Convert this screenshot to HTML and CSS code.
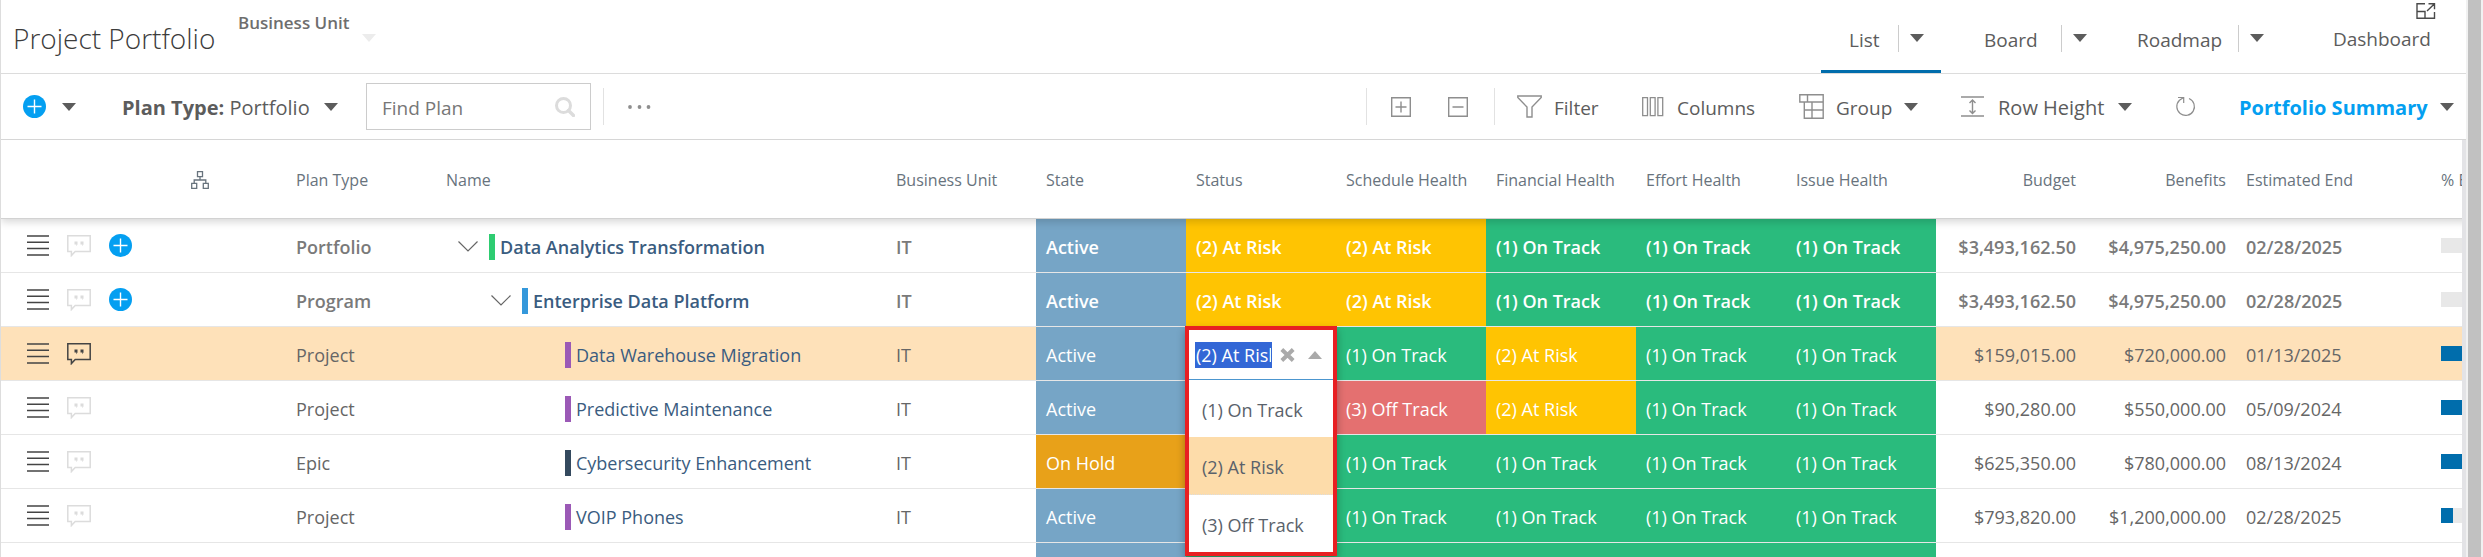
FILE: index.html
```html
<!DOCTYPE html>
<html lang="en">
<head>
<meta charset="utf-8">
<title>Project Portfolio</title>
<link rel="stylesheet" href="styles.css">
</head>
<body>
<svg class="sprite" aria-hidden="true">
  <symbol id="i-menu" viewBox="0 0 22 21"><path d="M0 1h22M0 7.3h22M0 13.6h22M0 19.9h22" fill="none" stroke="currentColor" stroke-width="1.5"/></symbol>
  <symbol id="i-note" viewBox="0 0 24 22"><path d="M.8.8h22.4v15.8H8.2L4.4 20.6v-4H.8z" fill="none" stroke="currentColor" stroke-width="1.5"/><path d="M7.5 6.5h3v3l-1.4 1.8.3-1.8H7.5zM13.5 6.5h3v3l-1.4 1.8.3-1.8h-1.9z" fill="currentColor"/></symbol>
  <symbol id="i-plus" viewBox="0 0 23 23"><circle cx="11.5" cy="11.5" r="11.5" fill="#049ff1"/><path d="M11.5 4.5v14M4.5 11.5h14" stroke="#fff" stroke-width="1.4"/></symbol>
  <symbol id="i-caret" viewBox="0 0 14 8"><path d="M0 0h14L7 8z" fill="currentColor"/></symbol>
  <symbol id="i-chev" viewBox="0 0 20 11"><path d="M.5.5 10 10 19.5.5" fill="none" stroke="currentColor" stroke-width="1.2"/></symbol>
</svg>

<div class="app">
  <main class="page">
    <header class="topbar">
      <h1 class="title">Project Portfolio</h1>
      <div class="unit">
        <span class="unit-label">Business Unit</span>
        <button class="icon-btn unit-caret" aria-label="Choose business unit"><svg class="caret"><use href="#i-caret"/></svg></button>
      </div>
      <nav class="tabs">
        <div class="tab tab-list active"><a class="tab-link" href="#list">List</a><button class="tab-more" aria-label="List options"><svg class="caret"><use href="#i-caret"/></svg></button></div>
        <div class="tab tab-board"><a class="tab-link" href="#board">Board</a><button class="tab-more" aria-label="Board options"><svg class="caret"><use href="#i-caret"/></svg></button></div>
        <div class="tab tab-road"><a class="tab-link" href="#roadmap">Roadmap</a><button class="tab-more" aria-label="Roadmap options"><svg class="caret"><use href="#i-caret"/></svg></button></div>
        <div class="tab tab-dash">
          <button class="icon-btn popout" aria-label="Open in new window"><svg width="20" height="16" viewBox="0 0 20 16" fill="none" stroke="currentColor" stroke-width="1.4"><path d="M9 .8H1v14.4h17.500V9M1 8.500h8v6.700M12.500.8h6v5.500M18.500.8 11 8"/></svg></button>
          <a class="tab-link" href="#dashboard">Dashboard</a>
        </div>
      </nav>
    </header>

    <div class="toolbar">
      <button class="icon-btn add" aria-label="Add"><svg class="plus"><use href="#i-plus"/></svg><svg class="caret"><use href="#i-caret"/></svg></button>
      <button class="tool plan-type"><span><b>Plan Type:</b> Portfolio</span><svg class="caret"><use href="#i-caret"/></svg></button>
      <label class="search">
        <input class="search-input" type="text" placeholder="Find Plan" aria-label="Find Plan">
        <svg class="search-icon" viewBox="0 0 20 20" fill="none" stroke="currentColor"><circle cx="8.500" cy="8.500" r="7" stroke-width="3"/><path d="m13.500 13.500 5 5" stroke-width="3.400" stroke-linecap="round"/></svg>
      </label>
      <span class="sep sep-search"></span>
      <button class="icon-btn more" aria-label="More"><svg width="23" height="4" viewBox="0 0 23 4" fill="currentColor"><circle cx="2" cy="2" r="1.900"/><circle cx="11.500" cy="2" r="1.900"/><circle cx="20.500" cy="2" r="1.900"/></svg></button>
      <div class="tools">
        <span class="sep"></span>
        <button class="icon-btn expand" aria-label="Expand all"><svg width="20" height="20" viewBox="0 0 20 20" fill="none" stroke="currentColor" stroke-width="1.400"><path d="M.7.7h18.600v18.600H.7zM10 4.500v11M4.500 10h11"/></svg></button>
        <button class="icon-btn collapse" aria-label="Collapse all"><svg width="20" height="20" viewBox="0 0 20 20" fill="none" stroke="currentColor" stroke-width="1.400"><path d="M.7.7h18.600v18.600H.7zM4.500 10h11"/></svg></button>
        <span class="sep"></span>
        <button class="tool t-filter"><svg width="25" height="23" viewBox="0 0 25 23" fill="none" stroke="currentColor" stroke-width="1.400"><path d="M.8 1h23.400v1.500L15 12v10h-5V12L.8 2.500z"/></svg><span>Filter</span></button>
        <button class="tool t-columns"><svg width="22" height="20" viewBox="0 0 22 20" fill="none" stroke="currentColor" stroke-width="1.300"><path d="M.7.7h4.800v18H.7zM8.300.7h4.800v18H8.300zM15.900.7h4.800v18h-4.800z"/></svg><span>Columns</span></button>
        <button class="tool t-group"><svg width="25" height="25" viewBox="0 0 25 25" fill="none" stroke="currentColor" stroke-width="1.400"><path d="M.8.800h23.400v23.400H5.300V8H.8zM5.300 8h18.900M5.300 16h18.900M8.500.8V8M13 8v16.200"/></svg><span>Group</span><svg class="caret"><use href="#i-caret"/></svg></button>
        <button class="tool t-height"><svg width="23" height="22" viewBox="0 0 23 22" fill="none" stroke="currentColor" stroke-width="1.400"><path d="M0 1h23M0 20h23M11.500 4.500v12.500M8.500 7l3-3 3 3M8.500 14.500l3 3 3-3"/></svg><span>Row Height</span><svg class="caret"><use href="#i-caret"/></svg></button>
        <button class="icon-btn refresh" aria-label="Refresh"><svg width="20" height="21" viewBox="0 0 20 21" fill="none" stroke="currentColor" stroke-width="1.200"><path d="M13 2.500a8.800 8.800 0 1 1-9.500 1.800L7.500 1.500M2 1.500h5.700V7"/></svg></button>
        <button class="tool t-view"><span>Portfolio Summary</span><svg class="caret"><use href="#i-caret"/></svg></button>
      </div>
    </div>

    <div class="grid-wrap">
      <table class="grid">
        <colgroup><col class="c-act"><col class="c-tree"><col class="c-150"><col class="c-name"><col class="c-150"><col class="c-150"><col class="c-150"><col class="c-150"><col class="c-150"><col class="c-150"><col class="c-150"><col class="c-150"><col class="c-150"><col class="c-end"><col class="c-150"></colgroup>
        <thead>
          <tr>
            <th></th>
            <th><svg class="tree" width="18" height="18" viewBox="0 0 18 18" fill="none" stroke="currentColor" stroke-width="1.300"><path d="M6.500.700h5v5h-5zM.7 12.300h5v5h-5zM12.300 12.300h5v5h-5zM9 5.700V9M3.200 12.300V9h11.600v3.300"/></svg></th>
            <th>Plan Type</th><th>Name</th><th>Business Unit</th><th>State</th><th>Status</th><th>Schedule Health</th><th>Financial Health</th><th>Effort Health</th><th>Issue Health</th><th class="num">Budget</th><th class="num">Benefits</th><th>Estimated End</th><th>% Elapsed</th>
          </tr>
        </thead>
        <tbody>
          <tr class="parent">
            <td><div class="acts"><button class="icon-btn" aria-label="Row menu"><svg class="menu"><use href="#i-menu"/></svg></button><button class="icon-btn note" aria-label="Comments"><svg class="bubble"><use href="#i-note"/></svg></button><button class="icon-btn" aria-label="Add child"><svg class="plus"><use href="#i-plus"/></svg></button></div></td>
            <td></td><td>Portfolio</td>
            <td><div class="name lv1"><svg class="chev"><use href="#i-chev"/></svg><i class="bar green"></i><a href="#p1">Data Analytics Transformation</a></div></td>
            <td>IT</td><td class="st-active">Active</td><td class="risk">(2) At Risk</td><td class="risk">(2) At Risk</td><td class="ok">(1) On Track</td><td class="ok">(1) On Track</td><td class="ok">(1) On Track</td><td class="num">$3,493,162.50</td><td class="num">$4,975,250.00</td><td>02/28/2025</td><td><div class="meter"></div></td>
          </tr>
          <tr class="parent">
            <td><div class="acts"><button class="icon-btn" aria-label="Row menu"><svg class="menu"><use href="#i-menu"/></svg></button><button class="icon-btn note" aria-label="Comments"><svg class="bubble"><use href="#i-note"/></svg></button><button class="icon-btn" aria-label="Add child"><svg class="plus"><use href="#i-plus"/></svg></button></div></td>
            <td></td><td>Program</td>
            <td><div class="name lv2"><svg class="chev"><use href="#i-chev"/></svg><i class="bar blue"></i><a href="#p2">Enterprise Data Platform</a></div></td>
            <td>IT</td><td class="st-active">Active</td><td class="risk">(2) At Risk</td><td class="risk">(2) At Risk</td><td class="ok">(1) On Track</td><td class="ok">(1) On Track</td><td class="ok">(1) On Track</td><td class="num">$3,493,162.50</td><td class="num">$4,975,250.00</td><td>02/28/2025</td><td><div class="meter"></div></td>
          </tr>
          <tr class="selected">
            <td><div class="acts"><button class="icon-btn" aria-label="Row menu"><svg class="menu"><use href="#i-menu"/></svg></button><button class="icon-btn note has" aria-label="Comments"><svg class="bubble"><use href="#i-note"/></svg></button></div></td>
            <td></td><td>Project</td>
            <td><div class="name lv3"><i class="bar purple"></i><a href="#p3">Data Warehouse Migration</a></div></td>
            <td>IT</td><td class="st-active">Active</td>
            <td class="ok editing">
              <div class="combo">
                <div class="combo-field">
                  <input class="combo-input" type="text" value="(2) At Risk" aria-label="Status">
                  <button class="icon-btn combo-btn" aria-label="Clear"><svg width="15" height="14" viewBox="0 0 15 14" stroke="currentColor" stroke-width="4"><path d="m1.800 1.500 11.400 11M13.200 1.500l-11.400 11"/></svg></button>
                  <button class="icon-btn combo-btn" aria-label="Close list"><svg class="caret up"><use href="#i-caret"/></svg></button>
                </div>
                <ul class="combo-list" role="listbox">
                  <li role="option">(1) On Track</li>
                  <li class="picked" role="option" aria-selected="true">(2) At Risk</li>
                  <li role="option">(3) Off Track</li>
                </ul>
              </div>
            </td>
            <td class="ok">(1) On Track</td><td class="risk">(2) At Risk</td><td class="ok">(1) On Track</td><td class="ok">(1) On Track</td><td class="num">$159,015.00</td><td class="num">$720,000.00</td><td>01/13/2025</td><td><div class="meter"><div class="fill" style="width:100%"></div></div></td>
          </tr>
          <tr>
            <td><div class="acts"><button class="icon-btn" aria-label="Row menu"><svg class="menu"><use href="#i-menu"/></svg></button><button class="icon-btn note" aria-label="Comments"><svg class="bubble"><use href="#i-note"/></svg></button></div></td>
            <td></td><td>Project</td>
            <td><div class="name lv3"><i class="bar purple"></i><a href="#p4">Predictive Maintenance</a></div></td>
            <td>IT</td><td class="st-active">Active</td><td class="ok"></td><td class="off">(3) Off Track</td><td class="risk">(2) At Risk</td><td class="ok">(1) On Track</td><td class="ok">(1) On Track</td><td class="num">$90,280.00</td><td class="num">$550,000.00</td><td>05/09/2024</td><td><div class="meter"><div class="fill" style="width:100%"></div></div></td>
          </tr>
          <tr>
            <td><div class="acts"><button class="icon-btn" aria-label="Row menu"><svg class="menu"><use href="#i-menu"/></svg></button><button class="icon-btn note" aria-label="Comments"><svg class="bubble"><use href="#i-note"/></svg></button></div></td>
            <td></td><td>Epic</td>
            <td><div class="name lv3"><i class="bar navy"></i><a href="#p5">Cybersecurity Enhancement</a></div></td>
            <td>IT</td><td class="st-hold">On Hold</td><td class="ok"></td><td class="ok">(1) On Track</td><td class="ok">(1) On Track</td><td class="ok">(1) On Track</td><td class="ok">(1) On Track</td><td class="num">$625,350.00</td><td class="num">$780,000.00</td><td>08/13/2024</td><td><div class="meter"><div class="fill" style="width:100%"></div></div></td>
          </tr>
          <tr>
            <td><div class="acts"><button class="icon-btn" aria-label="Row menu"><svg class="menu"><use href="#i-menu"/></svg></button><button class="icon-btn note" aria-label="Comments"><svg class="bubble"><use href="#i-note"/></svg></button></div></td>
            <td></td><td>Project</td>
            <td><div class="name lv3"><i class="bar purple"></i><a href="#p6">VOIP Phones</a></div></td>
            <td>IT</td><td class="st-active">Active</td><td class="ok"></td><td class="ok">(1) On Track</td><td class="ok">(1) On Track</td><td class="ok">(1) On Track</td><td class="ok">(1) On Track</td><td class="num">$793,820.00</td><td class="num">$1,200,000.00</td><td>02/28/2025</td><td><div class="meter"><div class="fill" style="width:9%"></div></div></td>
          </tr>
          <tr>
            <td></td><td></td><td></td><td></td><td></td><td class="st-active"></td><td class="ok"></td><td class="ok"></td><td class="ok"></td><td class="ok"></td><td class="ok"></td><td></td><td></td><td></td><td></td>
          </tr>
        </tbody>
      </table>
    </div>
  </main>
  <div class="scrollbar" aria-hidden="true"></div>
</div>
</body>
</html>
```
FILE: styles.css
```css
* { box-sizing: border-box; }

body {
  margin: 0;
  overflow: hidden;
  background: #fff;
  color: #666;
  font: 18px/24px "Open Sans", "Noto Sans", sans-serif;
}

button, input { font: inherit; color: inherit; }
button { padding: 0; border: 0; background: none; cursor: pointer; }
a { color: inherit; text-decoration: none; }
svg { display: block; flex: none; }
.sprite { position: absolute; width: 0; height: 0; }

.caret { width: 14px; height: 8px; color: #5c5c5c; }
.plus { width: 23px; height: 23px; }
.icon-btn { display: flex; align-items: center; color: #8e8e8e; }

.app { display: flex; height: 100vh; }
.page {
  flex: 1;
  min-width: 0;
  display: flex;
  flex-direction: column;
  border-left: 1px solid #ddd;
}
.scrollbar { width: 17px; background: #c1c1c1; border: solid #f1f1f1; border-width: 0 2px; }

/* Title and view tabs */
.topbar {
  display: flex;
  height: 74px;
  border-bottom: 1px solid #dcdcdc;
  flex: none;
}
.title {
  margin: 0;
  padding: 18px 0 0 12px;
  width: 237px;
  font-size: 28px;
  line-height: 40px;
  font-weight: 300;
  color: #3c3c3c;
  white-space: nowrap;
}
.unit { display: flex; gap: 13px; padding-top: 11px; }
.unit-label { font-size: 17px; font-weight: 600; color: #6e6e6e; }
.unit-caret { height: 54px; }
.unit-caret .caret { color: #ececec; }

.tabs { display: flex; margin-left: auto; font-size: 19px; color: #5c5c5c; }
.tab { display: flex; padding-top: 25px; align-items: flex-start; position: relative; }
.tab-link { line-height: 30px; }
.tab-more { display: flex; height: 27px; padding: 9px 0 0 11px; border-left: 1px solid #ccc; }
.tab-list { width: 120px; padding-left: 28px; justify-content: space-between; padding-right: 17px; }
.active { border-bottom: 3px solid #006dac; }
.tab-board { width: 146px; padding-left: 43px; justify-content: space-between; }
.tab-road { width: 177px; padding-left: 50px; justify-content: space-between; }
.tab-dash { width: 202px; padding: 24px 35px 0 0; justify-content: flex-end; }
.popout { position: absolute; top: 3px; right: 30px; color: #4a4a4a; }

/* Toolbar */
.toolbar {
  display: flex;
  align-items: center;
  height: 66px;
  border-bottom: 1px solid #d6d6d6;
  flex: none;
  font-size: 19px;
  color: #5c5c5c;
}
.tool { display: flex; align-items: center; gap: 12px; white-space: nowrap; }
.tool > svg { color: #8e8e8e; }
.tool > .caret { color: #5c5c5c; }
.tool span { padding-top: 2px; }
.add { gap: 16px; margin-left: 22px; width: 99px; }
.plan-type { width: 216px; justify-content: space-between; font-size: 20px; }
.search {
  display: flex;
  align-items: center;
  width: 225px;
  height: 47px;
  margin-left: 28px;
  padding: 0 15px;
  border: 1px solid #ccc;
}
.search-input { flex: 1; min-width: 0; border: 0; outline: 0; padding: 2px 0 0; background: none; }
.search-input::placeholder { color: #777; opacity: 1; }
.search-icon { width: 20px; height: 20px; color: #dcdcdc; }
.sep { width: 1px; height: 37px; background: #e2e2e2; }
.sep-search { margin-left: 12px; }
.more { margin-left: 24px; }
.tools { display: flex; align-items: center; margin-left: auto; padding-right: 12px; }
.expand { margin-left: 24px; width: 57px; }
.collapse { width: 46px; }
.t-filter { margin-left: 22px; width: 125px; }
.t-columns { width: 157px; gap: 13px; }
.t-group { width: 162px; }
.t-height { width: 215px; gap: 14px; font-size: 20px; }
.refresh { width: 63px; }
.t-view { width: 215px; justify-content: space-between; font-size: 20px; }
.t-view span { font-weight: 700; color: #049ff1; }

/* Plan grid */
.grid-wrap { flex: 1; min-height: 0; overflow: hidden; border-right: 4px solid #e3e3e6; }
.grid { table-layout: fixed; width: 2580px; border-spacing: 0; }
.c-act { width: 155px; }
.c-tree { width: 130px; }
.c-150 { width: 150px; }
.c-name { width: 450px; }
.c-end { width: 195px; }

.grid th {
  height: 79px;
  padding: 2px 10px 0;
  border-bottom: 1px solid #d2d2d2;
  background: #fff;
  font-size: 16px;
  font-weight: 400;
  color: #68737d;
  text-align: left;
  white-space: nowrap;
}
.grid thead { position: relative; z-index: 1; box-shadow: 0 3px 8px rgba(0, 0, 0, .16); }
.grid td {
  height: 54px;
  padding: 2px 10px 0;
  border-bottom: 1px solid #e6e6e6;
  white-space: nowrap;
}
.grid .num { text-align: right; }
.tree { margin-left: 25px; }
.parent { font-weight: 600; color: #7a7a7a; }
.selected { background: #fee1b9; }

.acts { display: flex; align-items: center; gap: 18px; height: 50px; margin-top: -2px; padding-left: 16px; }
.menu { width: 22px; height: 21px; color: #444; }
.bubble { width: 24px; height: 22px; color: #dcdcdc; }
.has .bubble { color: #444; }

.name { display: flex; align-items: center; color: #3a5c80; }
.chev { width: 20px; height: 11px; margin-right: 11px; color: #666; }
.bar { width: 6px; height: 26px; margin-right: 5px; }
.lv1 { padding-left: 12px; }
.lv2 { padding-left: 45px; }
.lv3 { padding-left: 119px; }
.green { background: #2ecc71; }
.blue { background: #3498db; }
.purple { background: #9b59b6; }
.navy { background: #34495e; }

.grid .st-active { background: #76a5c6; color: #fff; }
.grid .st-hold { background: #e8a119; color: #fff; }
.grid .risk { background: #ffc402; color: #fff; }
.grid .ok { background: #2abb7d; color: #fff; }
.grid .off { background: #e47070; color: #fff; }

.meter { height: 15px; margin-top: -2px; background: #e8e8e8; }
.fill { height: 15px; background: #006dac; }

/* Status editor */
.editing { position: relative; }
.combo {
  position: absolute;
  top: -1px;
  left: -1px;
  width: 152px;
  z-index: 2;
  border: 4px solid #e81f22;
  background: #fff;
  color: #5a626b;
  box-shadow: 0 4px 8px rgba(0, 0, 0, .3);
}
.combo-field {
  display: flex;
  align-items: center;
  height: 50px;
  padding: 0 11px 0 6px;
  border-bottom: 1px solid #4c96cf;
}
.combo-input {
  width: 77px;
  height: 26px;
  padding: 0 1px;
  border: 0;
  outline: 0;
  background: #3367d6;
  color: #fff;
}
.combo-btn { margin-left: 8px; color: #aaa; }
.combo-btn + .combo-btn { margin-left: auto; }
.up { transform: rotate(180deg); color: #aaa; }
.combo-list { margin: 0; padding: 0; list-style: none; }
.combo-list li { height: 57px; padding: 2px 13px 0; line-height: 56px; }
.combo-list .picked { height: 58px; background: #fddcaa; border-bottom: 1px dotted #ddd; }
```
